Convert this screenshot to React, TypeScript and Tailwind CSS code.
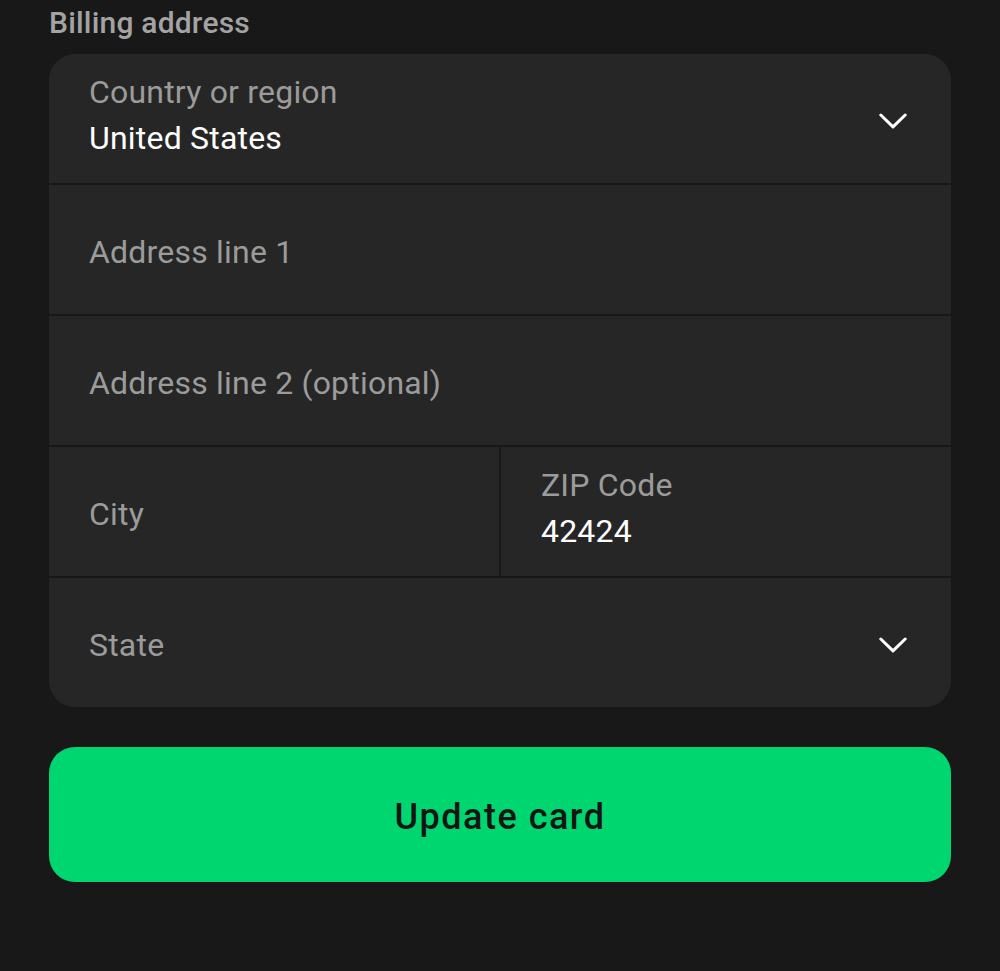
function Chevron() {
  return (
    <svg width="28" height="16" viewBox="0 0 28 16" fill="none" className="mt-[4px] shrink-0">
      <polyline points="1.8,2 14,13.8 26.2,2" stroke="white" strokeWidth="3" strokeLinecap="round" strokeLinejoin="round" />
    </svg>
  );
}

function Field({ label, value, chevron }: { label: string; value?: string; chevron?: boolean }) {
  return (
    <div className="flex h-[129px] items-center justify-between bg-[#262626] pl-[40px] pr-[44px]">
      <div className={value ? "flex flex-col pb-[8px]" : "flex flex-col pt-[4px]"}>
        <span className="text-[32px] leading-[46px] tracking-[0.2px] text-[#9b9b9b]">{label}</span>
        {value && <span className="text-[32px] leading-[46px] tracking-[0.2px] text-white">{value}</span>}
      </div>
      {chevron && <Chevron />}
    </div>
  );
}

export default function App() {
  return (
    <div className="min-h-[971px] bg-[#181818] px-[49px]" style={{ fontFamily: "Roboto, sans-serif" }}>
      <h2 className="pt-[3px] text-[30px] font-medium leading-[40px] tracking-[0.2px] text-[#a3a3a3]">Billing address</h2>

      <div className="mt-[11px] flex flex-col gap-[2px] overflow-hidden rounded-[26px] bg-[#181818]">
        <Field label="Country or region" value="United States" chevron />
        <Field label="Address line 1" />
        <Field label="Address line 2 (optional)" />
        <div className="grid grid-cols-2 gap-[2px]">
          <Field label="City" />
          <Field label="ZIP Code" value="42424" />
        </div>
        <Field label="State" chevron />
      </div>

      <button className="mt-[40px] flex h-[135px] w-full items-center justify-center rounded-[26px] bg-[#00d66f] pt-[4px] text-[36px] font-medium tracking-[1.5px] text-[#151515]">
        Update card
      </button>
    </div>
  );
}
